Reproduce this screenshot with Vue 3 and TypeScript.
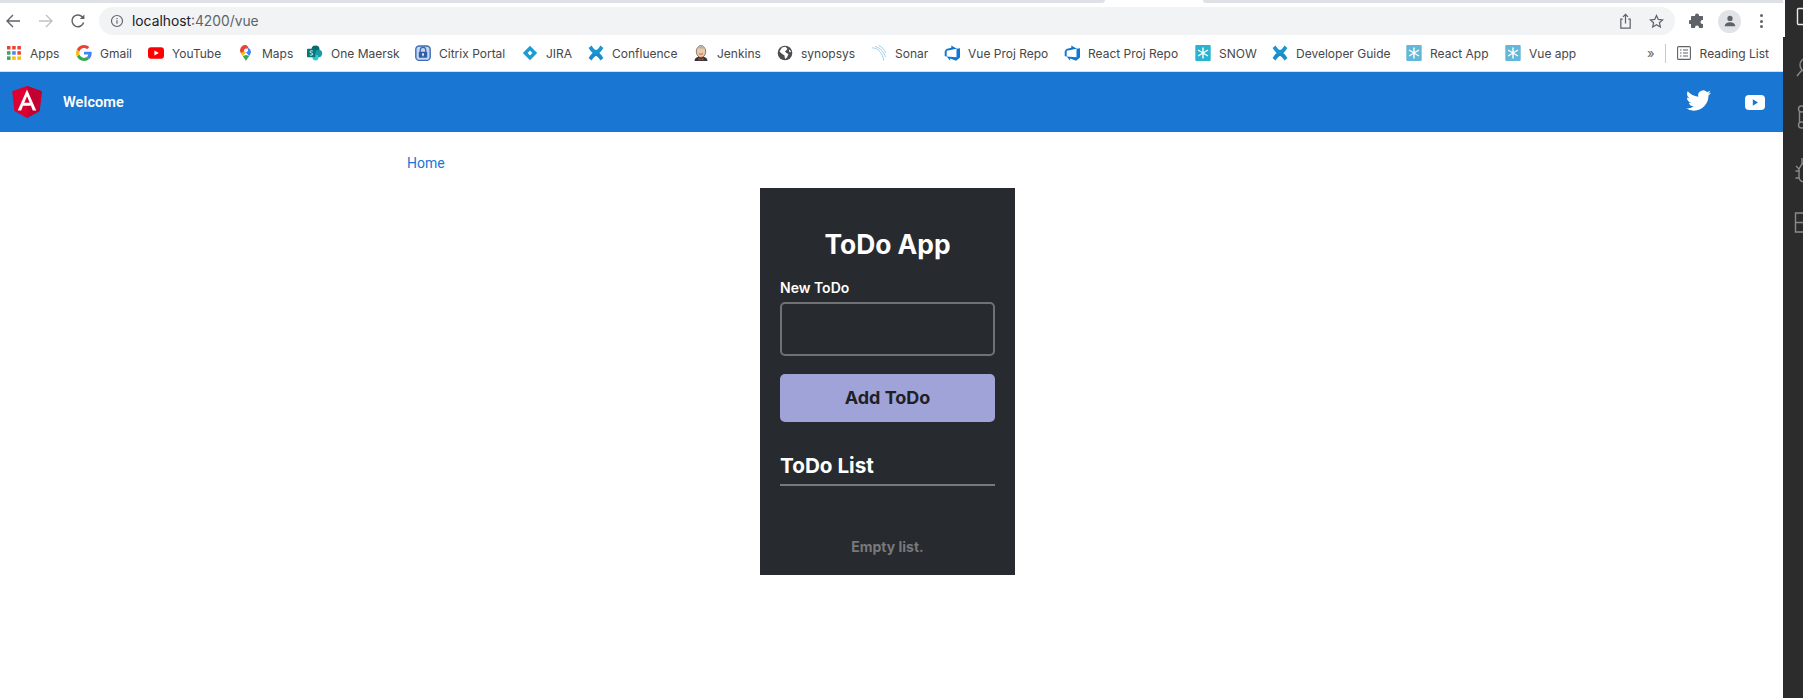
<template>
  <div class="screen">
    <div class="browser">
      <!-- tab strip -->
      <div class="tabs">
        <div class="tab-left" />
        <div class="tab-gap" />
        <div class="tab-right" />
      </div>

      <!-- toolbar -->
      <div class="toolbar">
        <svg class="nav" viewBox="0 0 16 16" fill="none" stroke="#5f6368" stroke-width="1.4">
          <path d="M15 8H2M8 2 2 8l6 6" />
        </svg>
        <svg class="nav fwd" viewBox="0 0 16 16" fill="none" stroke="#bdc1c6" stroke-width="1.4">
          <path d="M1 8h13M8 2l6 6-6 6" />
        </svg>
        <svg class="nav reload" viewBox="0 0 16 16" fill="none" stroke="#5f6368" stroke-width="1.5">
          <path d="M13.6 9.5A5.9 5.9 0 1 1 12.2 3.7L14 5.6" />
          <path d="M14.4 1.4v4.7H9.7" stroke="none" fill="#5f6368" />
        </svg>
        <div class="omnibox">
          <svg class="info" viewBox="0 0 16 16" fill="none" stroke="#5f6368" stroke-width="1.3">
            <circle cx="8" cy="8" r="6.3" />
            <path d="M8 7.2v4M8 4.5v1.4" />
          </svg>
          <span class="host">localhost</span><span class="path">:4200/vue</span>
          <svg class="share" viewBox="0 0 16 18" fill="none" stroke="#5f6368" stroke-width="1.3">
            <path d="M5 6.5H3v9.5h10V6.5h-2M8 11V1.5M5.3 4 8 1.3 10.7 4" />
          </svg>
          <svg class="star" viewBox="0 0 16 16" fill="none" stroke="#5f6368" stroke-width="1.3">
            <path d="M8 1.6l1.9 4.2 4.6.5-3.4 3 1 4.5L8 11.5l-4.1 2.3 1-4.5-3.400-3 4.6-.5z" />
          </svg>
        </div>
        <svg class="puzzle" viewBox="0 0 16 16" fill="#5f6368">
          <path d="M6 2.500a2 2 0 0 1 4 0V3h3.200a.8.8 0 0 1 .8.8V7h-.5a2 2 0 0 0 0 4h.5v3.200a.8.8 0 0 1-.8.8H10v-.5a2 2 0 0 0-4 0v.5H2.800a.8.8 0 0 1-.8-.8V11h-.5a2 2 0 0 1 0-4H2V3.800a.8.8 0 0 1 .8-.8H6z" />
        </svg>
        <div class="avatar">
          <svg viewBox="0 0 16 16" fill="#5f6368">
            <circle cx="8" cy="5" r="3" />
            <path d="M2 14c0-3 3-4.500 6-4.500s6 1.500 6 4.500z" />
          </svg>
        </div>
        <div class="kebab"><i /><i /><i /></div>
      </div>

      <div class="lower">
        <!-- bookmarks -->
        <div class="bookmarks">
          <div
            v-for="b in bookmarks"
            :key="b.label"
            class="bookmark"
            :style="{ width: b.width + 'px' }"
          >
            <svg class="bm-icon" viewBox="0 0 16 16">
              <template v-if="b.icon === 'apps'">
                <rect v-for="c in appDots" :key="c.k" :x="c.x" :y="c.y" width="3.500" height="3.500" :fill="c.fill" />
              </template>
              <template v-else-if="b.icon === 'google'">
                <path fill="#4285f4" d="M15.700 8.200c0-.600-.050-1-.150-1.500H8v2.900h4.300c-.100.700-.550 1.800-1.600 2.500l2.500 1.900c1.500-1.400 2.500-3.400 2.500-5.800z" />
                <path fill="#34a853" d="M8 16c2.200 0 4-.700 5.200-2l-2.500-1.900c-.650.450-1.550.800-2.700.800-2.100 0-3.900-1.400-4.500-3.300L.900 11.600C2.200 14.200 4.900 16 8 16z" />
                <path fill="#fbbc05" d="M3.500 9.600A5 5 0 0 1 3.200 8c0-.550.100-1.100.300-1.600L.900 4.400a8 8 0 0 0 0 7.200z" />
                <path fill="#ea4335" d="M8 3.100c1.500 0 2.500.650 3.100 1.200l2.250-2.200C12 .800 10.200 0 8 0 4.900 0 2.200 1.800.900 4.400l2.600 2C4.100 4.500 5.900 3.100 8 3.100z" />
              </template>
              <template v-else-if="b.icon === 'youtube'">
                <rect y="2.200" width="16" height="11.600" rx="3" fill="#f00" />
                <path d="M6.400 5.500 10.800 8l-4.400 2.500z" fill="#fff" />
              </template>
              <template v-else-if="b.icon === 'maps'">
                <path fill="#34a853" d="M8 16s-2-3.500-3.200-5l3.200-1 3.200 1C10 12.500 8 16 8 16z" />
                <path fill="#fbbc05" d="M3 8.200c.4 1 1 1.900 1.800 2.800L8 7.500 5.500 5z" />
                <path fill="#ea4335" d="M8 0a5.300 5.300 0 0 0-5 8.200L10.500 2.800A5 5 0 0 0 8 0z" />
                <path fill="#4285f4" d="M13 7.500c-.4 1.300-1 2.400-1.800 3.500L8 7.500l2.500-4.700A5.300 5.300 0 0 1 13 7.500z" />
                <circle cx="8" cy="5.300" r="1.900" fill="#fff" />
              </template>
              <template v-else-if="b.icon === 'maersk'">
                <circle cx="8.500" cy="4.500" r="4" fill="#036c70" />
                <circle cx="11.500" cy="8.500" r="3.700" fill="#1a9ba1" />
                <circle cx="8.500" cy="12.500" r="3" fill="#37c6d0" />
                <rect y="3.800" width="8.400" height="8.400" rx=".8" fill="#03787c" />
                <path d="M5.800 6.100c-1.300-.7-2.900-.3-2.900.7 0 1.300 2.900.9 2.900 2.300 0 1.100-1.700 1.300-3 .7" fill="none" stroke="#fff" stroke-width=".9" />
              </template>
              <template v-else-if="b.icon === 'citrix'">
                <rect x=".8" y="1" width="14.400" height="14.400" rx="3.500" fill="#c4d6f0" stroke="#3b6cb7" stroke-width="1.400" />
                <path d="M5.300 7V5a2.700 2.700 0 0 1 5.400 0v2" fill="none" stroke="#3b6cb7" stroke-width="1.300" />
                <rect x="3.800" y="6.800" width="8.400" height="6" rx=".8" fill="#2f5fa8" />
                <circle cx="8" cy="9.300" r="1" fill="#fff" />
                <rect x="7.500" y="9.300" width="1" height="2" fill="#fff" />
              </template>
              <template v-else-if="b.icon === 'jira'">
                <path d="M8 .8 15.200 8 8 15.200.8 8z" fill="#1d9bd7" />
                <path d="M8 5.600 10.400 8 8 10.400 5.600 8z" fill="#fff" />
              </template>
              <template v-else-if="b.icon === 'confluence' || b.icon === 'dev'">
                <path fill="#1a8ccc" d="M.6 13C3.500 8.500 6 6.500 8 6.500 10 6.500 12.500 8.500 15.400 13L12.500 15.600C10.500 12.500 9 11 8 11 7 11 5.500 12.500 3.500 15.600z" />
                <path fill="#1b96d3" d="M.6 13C3.500 8.500 6 6.500 8 6.500 10 6.500 12.500 8.500 15.400 13L12.500 15.600C10.500 12.500 9 11 8 11 7 11 5.500 12.500 3.500 15.600z" transform="rotate(180 8 8)" />
              </template>
              <template v-else-if="b.icon === 'jenkins'">
                <path d="M1.500 16c.3-3 2-4.500 6.500-4.500s6.200 1.500 6.500 4.500z" fill="#33373b" />
                <ellipse cx="8" cy="6.500" rx="4.700" ry="6" fill="#eec9a4" stroke="#5a4a42" stroke-width=".7" />
                <path d="M3.800 4C4.500 1 7 .4 8.500.5 11 .7 12.200 2.500 12.500 5L11 3.500C9 4 6 3 5 3.500z" fill="#b4b4ae" />
                <path d="M6 8.500c1 1 3 1 4 0" stroke="#7a4f3a" stroke-width=".7" fill="none" />
                <path d="M5.500 13 8 14l2.500-1v2.500L8 14.500 5.500 15.500z" fill="#d33833" />
              </template>
              <template v-else-if="b.icon === 'globe'">
                <circle cx="8" cy="8" r="7.300" fill="#4b4d50" />
                <path d="M5 2.500 8.500 1.800 10.500 4 8 6.500 9.500 8 11.500 9 10 12.500 8 14 7.500 10.500 4.500 8.500 2.500 6.500z" fill="#fff" />
                <path d="M12.500 4.500 14 6.500 13 7.500 11.800 6z" fill="#fff" />
              </template>
              <template v-else-if="b.icon === 'sonar'">
                <g fill="none" stroke="#8cc4ea" stroke-width=".8">
                  <path d="M1 2.800C7 3 12 8 12.600 15.500" />
                  <path d="M4 1.500C9.500 3 13.500 7.500 14.400 12" />
                  <path d="M7.500 .5c3.500 1.500 6 4 7.300 7.300" />
                </g>
              </template>
              <template v-else-if="b.icon === 'azure'">
                <path fill="#0f78d4" d="M16 3.200v9.400l-3.900 3.200-6-2.200v2.200L2.700 11.400l9.800.8V3.800zM12.800 3.800 7.300.4v2.300L2.300 4.100.7 6.200v4.700l2 .9V5.800z" />
              </template>
              <template v-else-if="b.icon === 'snow'">
                <rect x=".3" width="15.400" height="16" rx="1" fill="#27b4cf" />
                <path d="M8 2.500v11M3 5l10 6M13 5 3 11" stroke="#fff" stroke-width="1.400" />
              </template>
              <template v-else>
                <rect x=".3" width="15.400" height="16" rx="1" fill="#63b7d8" />
                <path d="M8 2.500v11M3 5l10 6M13 5 3 11" stroke="#fff" stroke-width="1.400" />
              </template>
            </svg>
            <span>{{ b.label }}</span>
          </div>
          <span class="more">»</span>
          <div class="sep" />
          <svg class="reading" viewBox="0 0 14 14" fill="none" stroke="#5f6368" stroke-width="1.100">
            <rect x=".6" y=".6" width="12.800" height="12.800" rx="1" />
            <path d="M3 4h1.500M6 4h5M3 7h1.500M6 7h5M3 10h1.500M6 10h5" />
          </svg>
          <span class="reading-text">Reading List</span>
        </div>

        <!-- app header -->
        <header class="app-bar">
          <svg class="ng" viewBox="31 30 188 200">
            <polygon points="125,30 31.900,63.200 46.100,186.300 125,230 203.900,186.300 218.100,63.200" fill="#dd0031" />
            <polygon points="125,30 125,230 203.900,186.300 218.100,63.200" fill="#c3002f" />
            <path fill="#fff" d="M125 52.100 66.800 182.600h21.700l11.700-29.200h49.400l11.700 29.200h21.700L125 52.100zM142 135.400h-34l17-40.900 17 40.900z" />
          </svg>
          <span class="welcome">Welcome</span>
          <svg class="twitter" viewBox="0 0 24 24" fill="#fff">
            <path d="M23.953 4.570a10 10 0 0 1-2.825.775 4.958 4.958 0 0 0 2.163-2.723c-.951.555-2.005.959-3.127 1.184a4.920 4.920 0 0 0-8.384 4.482C7.690 8.095 4.067 6.130 1.640 3.162a4.822 4.822 0 0 0-.666 2.475c0 1.710.870 3.213 2.188 4.096a4.904 4.904 0 0 1-2.228-.616v.060a4.923 4.923 0 0 0 3.946 4.827 4.996 4.996 0 0 1-2.212.085 4.936 4.936 0 0 0 4.604 3.417 9.867 9.867 0 0 1-6.102 2.105c-.390 0-.779-.023-1.170-.067a13.995 13.995 0 0 0 7.557 2.209c9.053 0 13.998-7.496 13.998-13.985 0-.210 0-.420-.015-.630A9.935 9.935 0 0 0 24 4.590z" />
          </svg>
          <svg class="yt" viewBox="0 0 20 15">
            <rect width="20" height="15" rx="4" fill="#fff" />
            <path d="M7.800 4.300 13 7.500l-5.200 3.200z" fill="#1976d2" />
          </svg>
        </header>

        <!-- page -->
        <main class="page">
          <div class="container">
            <a class="home">Home</a>
            <section class="card">
              <h1>ToDo App</h1>
              <label for="todo">New ToDo</label>
              <input id="todo" type="text" />
              <button type="button">Add ToDo</button>
              <h2>ToDo List</h2>
              <p class="empty">Empty list.</p>
            </section>
          </div>
        </main>
      </div>
    </div>

    <!-- editor activity bar behind the browser window -->
    <aside class="activity">
      <svg viewBox="0 0 18 240" fill="none" stroke="#8a8a8a" stroke-width="1.400">
        <rect x="12.500" y="8.500" width="12" height="16" stroke="#e8e8e8" rx="1" />
        <circle cx="22" cy="65" r="7" />
        <path d="M17 70l-5 6" />
        <circle cx="16.500" cy="109" r="3" />
        <circle cx="16.500" cy="125" r="3" />
        <path d="M14.500 112v10" />
        <path d="M17 158v6M10.500 171h4M10.500 178h4M11 166l3 3" />
        <path d="M24 164h-7l-3 5v8a5 5 0 0 0 5 5h5" />
        <path d="M24 213H10.500v19H24M10.500 222.500H24" />
      </svg>
    </aside>
  </div>
</template>

<script setup lang="ts">
interface Bookmark {
  label: string
  icon: string
  width: number
}

const bookmarks: Bookmark[] = [
  { label: 'Apps', icon: 'apps', width: 70 },
  { label: 'Gmail', icon: 'google', width: 72 },
  { label: 'YouTube', icon: 'youtube', width: 90 },
  { label: 'Maps', icon: 'maps', width: 69 },
  { label: 'One Maersk', icon: 'maersk', width: 108 },
  { label: 'Citrix Portal', icon: 'citrix', width: 107 },
  { label: 'JIRA', icon: 'jira', width: 66 },
  { label: 'Confluence', icon: 'confluence', width: 105 },
  { label: 'Jenkins', icon: 'jenkins', width: 84 },
  { label: 'synopsys', icon: 'globe', width: 94 },
  { label: 'Sonar', icon: 'sonar', width: 73 },
  { label: 'Vue Proj Repo', icon: 'azure', width: 120 },
  { label: 'React Proj Repo', icon: 'azure', width: 131 },
  { label: 'SNOW', icon: 'snow', width: 77 },
  { label: 'Developer Guide', icon: 'dev', width: 134 },
  { label: 'React App', icon: 'cloud', width: 99 },
  { label: 'Vue app', icon: 'cloud', width: 86 },
]

const appColors = ['#ea4335', '#ea4335', '#ea4335', '#34a853', '#4285f4', '#ea4335', '#34a853', '#fbbc05', '#fbbc05']
const appDots = appColors.map((fill, i) => ({
  k: i,
  fill,
  x: 1 + (i % 3) * 5.2,
  y: 1 + Math.floor(i / 3) * 5.2,
}))
</script>

<style>
html,
body {
  margin: 0;
  background: #fff;
}
</style>

<style scoped>
.screen {
  width: 1803px;
  height: 698px;
  display: flex;
  overflow: hidden;
  background: #2b2b2b;
  font-family: Inter, 'Liberation Sans', sans-serif;
}

.browser {
  width: 1785px;
  flex: none;
  display: flex;
  flex-direction: column;
}

/* ---------- Chrome ---------- */
.tabs {
  height: 3px;
  flex: none;
  display: flex;
  background: #fff;
}

.tab-left {
  width: 1105px;
  background: #dee1e6;
  border-bottom-right-radius: 4px;
}

.tab-gap {
  width: 98px;
}

.tab-right {
  width: 580px;
  background: #dee1e6;
  border-bottom-left-radius: 4px;
}

.toolbar {
  height: 34px;
  flex: none;
  box-sizing: border-box;
  display: flex;
  align-items: center;
  background: #fff;
  padding: 2px 0 0 5px;
}

.nav {
  width: 16px;
  height: 16px;
  flex: none;
}

.fwd {
  margin-left: 17px;
}

.reload {
  margin-left: 16px;
}

.omnibox {
  width: 1576px;
  height: 28px;
  margin-left: 13px;
  flex: none;
  display: flex;
  align-items: center;
  background: #f1f3f4;
  border-radius: 14px;
  padding-left: 11px;
  box-sizing: border-box;
  font-size: 13.800px;
}

.info {
  width: 14px;
  height: 14px;
  margin-right: 8px;
}

.host {
  color: #202124;
}

.path {
  color: #5f6368;
}

.share {
  width: 15px;
  height: 17px;
  margin-left: auto;
}

.star {
  width: 15px;
  height: 15px;
  margin-left: 16px;
  margin-right: 11px;
}

.puzzle {
  width: 16px;
  height: 16px;
  margin-left: 14px;
  flex: none;
}

.avatar {
  width: 23px;
  height: 23px;
  border-radius: 50%;
  background: #e1e3e8;
  margin-left: 13px;
  display: flex;
  align-items: center;
  justify-content: center;
  flex: none;
}

.avatar svg {
  width: 14px;
  height: 14px;
}

.kebab {
  display: flex;
  flex-direction: column;
  gap: 2.500px;
  margin-left: 19px;
}

.kebab i {
  display: block;
  width: 3px;
  height: 3px;
  border-radius: 50%;
  background: #5f6368;
}

.lower {
  flex: 1;
  width: 1783px;
  display: flex;
  flex-direction: column;
  background: #fff;
}

.bookmarks {
  height: 35px;
  flex: none;
  display: flex;
  align-items: center;
  padding: 0 0 2px 6px;
  box-sizing: border-box;
  border-bottom: 1px solid #cfe0f2;
  font-size: 12px;
  color: #45474a;
  white-space: nowrap;
}

.bookmark {
  display: flex;
  align-items: center;
  gap: 8px;
  flex: none;
}

.bm-icon {
  width: 16px;
  height: 16px;
  flex: none;
}

.more {
  margin-left: 56px;
  font-size: 13px;
  color: #5f6368;
}

.sep {
  width: 1px;
  height: 19px;
  background: #c8cacc;
  margin-left: 10px;
}

.reading {
  width: 14px;
  height: 14px;
  margin-left: 11px;
}

.reading-text {
  margin-left: 9px;
}

/* ---------- App ---------- */
.app-bar {
  height: 60px;
  flex: none;
  display: flex;
  align-items: center;
  background: #1976d2;
  padding: 0 18px 0 12px;
}

.ng {
  width: 30px;
  height: 32px;
}

.welcome {
  margin: 1px 0 0 21px;
  color: #fff;
  font: 600 14.500px Roboto, sans-serif;
  letter-spacing: 0.1px;
}

.twitter {
  width: 25px;
  height: 25px;
  margin: 0 0 3px auto;
}

.yt {
  width: 20px;
  height: 15px;
  margin-left: 34px;
}

.page {
  flex: 1;
}

.container {
  width: 961px;
  margin-left: 407px;
  display: flex;
  flex-direction: column;
}

.home {
  height: 56px;
  padding-top: 22px;
  box-sizing: border-box;
  font: 14px/18px Roboto, sans-serif;
  color: #1976d2;
}

.card {
  width: 255px;
  height: 387px;
  align-self: center;
  box-sizing: border-box;
  padding: 39px 20px 0;
  background: #272a2e;
  display: flex;
  flex-direction: column;
  color: #fff;
}

h1 {
  margin: 0;
  font-size: 26.400px;
  line-height: 34px;
  font-weight: 700;
  text-align: center;
}

label {
  margin-top: 18px;
  font-size: 14px;
  line-height: 18px;
  font-weight: 600;
}

input {
  height: 54px;
  margin-top: 5px;
  box-sizing: border-box;
  background: transparent;
  border: 2px solid #6f7173;
  border-radius: 5px;
  padding: 0;
}

button {
  height: 48px;
  margin-top: 18px;
  border: 0;
  border-radius: 5px;
  padding: 0 0 2px;
  background: #a0a3d8;
  color: #1f2026;
  font: 700 18px Inter, sans-serif;
}

h2 {
  margin: 29px 0 0;
  padding: 1px 0 4px;
  border-bottom: 2px solid #77797b;
  font-size: 20.700px;
  line-height: 28px;
  font-weight: 700;
}

.empty {
  margin: 52px 0 0;
  text-align: center;
  font-size: 14px;
  line-height: 18px;
  font-weight: 700;
  color: #77797b;
}

/* ---------- Activity bar ---------- */
.activity {
  flex: 1;
  overflow: hidden;
  background: #2c2c2c;
}

.activity svg {
  display: block;
  width: 18px;
  height: 240px;
}
</style>
